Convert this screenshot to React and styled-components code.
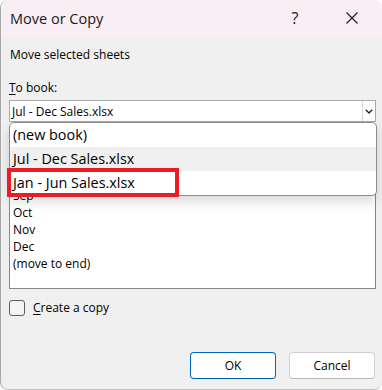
import React from "react";
import styled, { createGlobalStyle } from "styled-components";

const GlobalStyle = createGlobalStyle`
  html, body {
    margin: 0;
    padding: 0;
    background: #ffffff;
  }
  body {
    font-family: "Open Sans", "Noto Sans", sans-serif;
    color: #000;
  }
`;

const books = ["(new book)", "Jul - Dec Sales.xlsx", "Jan - Jun Sales.xlsx"];
const sheets = ["Jul", "Aug", "Sep", "Oct", "Nov", "Dec", "(move to end)"];

const App = () => {
  return (
    <>
      <GlobalStyle />
      <Window>
        <TitleBar>
          <Title>Move or Copy</Title>
          <HelpButton>?</HelpButton>
          <CloseButton>
            <svg width="12" height="12" viewBox="0 0 12 12">
              <path d="M0.5 0.5 L11.5 11.5 M11.5 0.5 L0.5 11.5" stroke="#1a1a1a" strokeWidth="1.1" fill="none" />
            </svg>
          </CloseButton>
        </TitleBar>
        <Body>
          <Caption>Move selected sheets</Caption>
          <Label $top={17}>
            <u>T</u>o book:
          </Label>
          <Field>
            <Combo>
              <ComboText>Jul - Dec Sales.xlsx</ComboText>
              <ComboArrow>
                <svg width="8" height="5" viewBox="0 0 8 5">
                  <path d="M0.8 0.8 L4 4 L7.2 0.8" stroke="#222" strokeWidth="1.4" fill="none" />
                </svg>
              </ComboArrow>
            </Combo>
            <Dropdown>
              {books.map((b, i) => (
                <Option key={b} $active={i === 1}>
                  {b}
                  {i === 2 && <Highlight />}
                </Option>
              ))}
            </Dropdown>
            <Label $top={9}>
              <u>B</u>efore sheet:
            </Label>
            <ListBox>
              {sheets.map((s) => (
                <ListItem key={s}>{s}</ListItem>
              ))}
            </ListBox>
          </Field>
          <CheckRow>
            <CheckBox />
            <CheckLabel>
              <u>C</u>reate a copy
            </CheckLabel>
          </CheckRow>
          <Buttons>
            <Button $primary>OK</Button>
            <Button>Cancel</Button>
          </Buttons>
        </Body>
      </Window>
    </>
  );
};
export default App;

const Window = styled.div`
  width: 382px;
  height: 390px;
  box-sizing: border-box;
  background: #f0f0f0;
  border-left: 1px solid #a8a8a8;
  border-bottom: 1px solid #c4c4c4;
  border-radius: 8px;
  overflow: hidden;
  display: flex;
  flex-direction: column;
`;
const TitleBar = styled.div`
  height: 36px;
  flex-shrink: 0;
  background: #f9eef3;
  display: flex;
  align-items: center;
  padding-left: 9px;
`;
const Title = styled.div`
  flex: 1;
  font-size: 14.5px;
  color: #1a1a1a;
`;
const HelpButton = styled.div`
  width: 46px;
  margin-right: 11px;
  text-align: center;
  font-size: 16px;
  color: #222;
`;
const CloseButton = styled.div`
  width: 46px;
  margin-right: 7px;
  display: flex;
  justify-content: center;
  align-items: center;
`;
const Body = styled.div`
  flex: 1;
  padding: 11px 6px 0 8px;
  display: flex;
  flex-direction: column;
`;
const Caption = styled.div`
  font-size: 12px;
  line-height: 16px;
  padding-left: 1px;
`;
const Label = styled.div`
  font-size: 12px;
  line-height: 16px;
  margin-top: ${(p) => p.$top}px;
  margin-bottom: 4px;
  u {
    text-underline-offset: 2px;
  }
`;
const Field = styled.div`
  position: relative;
  display: flex;
  flex-direction: column;
`;
const Combo = styled.div`
  height: 22px;
  box-sizing: border-box;
  border: 1px solid #a9a9a9;
  background: #fff;
  display: flex;
  align-items: center;
`;
const ComboText = styled.div`
  flex: 1;
  font-size: 12px;
  padding-left: 2px;
`;
const ComboArrow = styled.div`
  width: 12px;
  height: 100%;
  border-left: 1px solid #d6d6d6;
  display: flex;
  justify-content: center;
  align-items: center;
`;
const Dropdown = styled.div`
  position: absolute;
  top: 22px;
  left: 0;
  width: 368px;
  box-sizing: border-box;
  background: #fff;
  border: 1px solid #8c8c8c;
  border-radius: 5px;
  box-shadow: 0 6px 12px rgba(0, 0, 0, 0.14);
  z-index: 2;
`;
const Option = styled.div`
  position: relative;
  height: 24px;
  line-height: 24px;
  padding-left: 3px;
  font-size: 14.4px;
  background: ${(p) => (p.$active ? "#f0f0f0" : "transparent")};
`;
const Highlight = styled.span`
  position: absolute;
  left: -3px;
  top: -3px;
  width: 172px;
  height: 29px;
  box-sizing: border-box;
  border: 4px solid #ec1c24;
`;
const ListBox = styled.div`
  height: 138px;
  box-sizing: border-box;
  border: 1px solid #838790;
  background: #fff;
  padding: 1px 3px;
`;
const ListItem = styled.div`
  font-size: 12px;
  line-height: 17px;
`;
const CheckRow = styled.div`
  margin-top: 10px;
  display: flex;
  align-items: center;
  gap: 8px;
`;
const CheckBox = styled.div`
  width: 16px;
  height: 16px;
  box-sizing: border-box;
  border: 1px solid #5c5c5c;
  border-radius: 3px;
  background: #f5f5f5;
`;
const CheckLabel = styled.div`
  font-size: 12px;
  u {
    text-underline-offset: 2px;
  }
`;
const Buttons = styled.div`
  margin-top: 36px;
  display: flex;
  justify-content: flex-end;
  gap: 13px;
  padding-right: 1px;
`;
const Button = styled.div`
  width: 86px;
  height: 27px;
  box-sizing: border-box;
  border: 1px solid ${(p) => (p.$primary ? "#0067c0" : "#d0d0d0")};
  border-bottom-color: ${(p) => (p.$primary ? "#0059a8" : "#b8b8b8")};
  border-radius: 4px;
  background: #fff;
  display: flex;
  justify-content: center;
  align-items: center;
  font-size: 12px;
`;
